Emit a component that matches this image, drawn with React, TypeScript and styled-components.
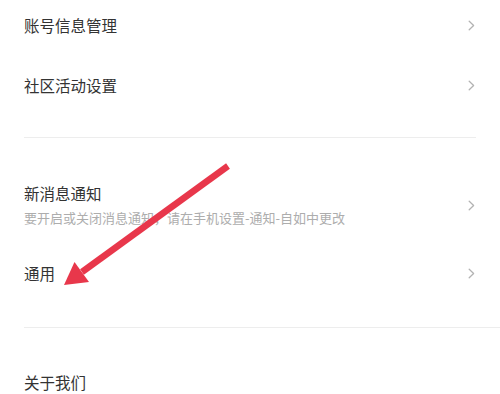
import React from 'react';
import styled, { createGlobalStyle } from 'styled-components';

const GlobalStyle = createGlobalStyle`
  html, body {
    margin: 0;
    padding: 0;
    background: #fff;
  }
  body {
    font-family: "Noto Sans CJK SC", "Noto Sans", sans-serif;
    -webkit-font-smoothing: antialiased;
  }
`;

const Page = styled.div`
  position: relative;
  width: 500px;
  height: 394px;
  overflow: hidden;
  background: #fff;
`;

const Section = styled.div<{ $top: number; $bottom: number; $gap: number }>`
  display: flex;
  flex-direction: column;
  padding: ${(p) => p.$top}px 0 ${(p) => p.$bottom}px;
  gap: ${(p) => p.$gap}px;
`;

const Divider = styled.div<{ $right: number }>`
  height: 1px;
  margin: 0 ${(p) => p.$right}px 0 24px;
  background: #ededed;
`;

const Row = styled.div`
  display: flex;
  align-items: center;
  justify-content: space-between;
  min-height: 50px;
  padding: 0 25px 0 24px;
`;

const TextBlock = styled.div`
  display: flex;
  flex-direction: column;
  gap: 4px;
`;

const Title = styled.span`
  font-size: 15.5px;
  line-height: 22px;
  color: #333;
`;

const Subtitle = styled.span`
  font-size: 13px;
  line-height: 20px;
  color: #adadad;
`;

const Overlay = styled.svg`
  position: absolute;
  left: 0;
  top: 0;
  pointer-events: none;
`;

const Chevron = () => (
  <svg width="7" height="11" viewBox="0 0 7 11">
    <path d="M1.2 1.2 L5.6 5.5 L1.2 9.8" fill="none" stroke="#b3b3b3" strokeWidth="1.3" strokeLinecap="round" strokeLinejoin="round" />
  </svg>
);

type Item = { title: string; sub?: string; arrow?: boolean };

const SettingRow: React.FC<Item> = ({ title, sub, arrow = true }) => (
  <Row>
    <TextBlock>
      <Title>{title}</Title>
      {sub && <Subtitle>{sub}</Subtitle>}
    </TextBlock>
    {arrow && <Chevron />}
  </Row>
);

const App: React.FC = () => {
  return (
    <>
      <GlobalStyle />
      <Page>
        <Section $top={0} $bottom={27} $gap={10}>
          <SettingRow title="账号信息管理" />
          <SettingRow title="社区活动设置" />
        </Section>
        <Divider $right={24} />
        <Section $top={42} $bottom={29} $gap={18}>
          <SettingRow title="新消息通知" sub="要开启或关闭消息通知，请在手机设置-通知-自如中更改" />
          <SettingRow title="通用" />
        </Section>
        <Divider $right={0} />
        <Section $top={29} $bottom={0} $gap={10}>
          <SettingRow title="关于我们" arrow={false} />
        </Section>

        <Overlay width="500" height="394" viewBox="0 0 500 394">
          <line x1="228" y1="166" x2="82" y2="272" stroke="#e8374b" strokeWidth="6.5" />
          <polygon points="64,285 74.5,262 89,282" fill="#e8374b" />
        </Overlay>
      </Page>
    </>
  );
};

export default App;
